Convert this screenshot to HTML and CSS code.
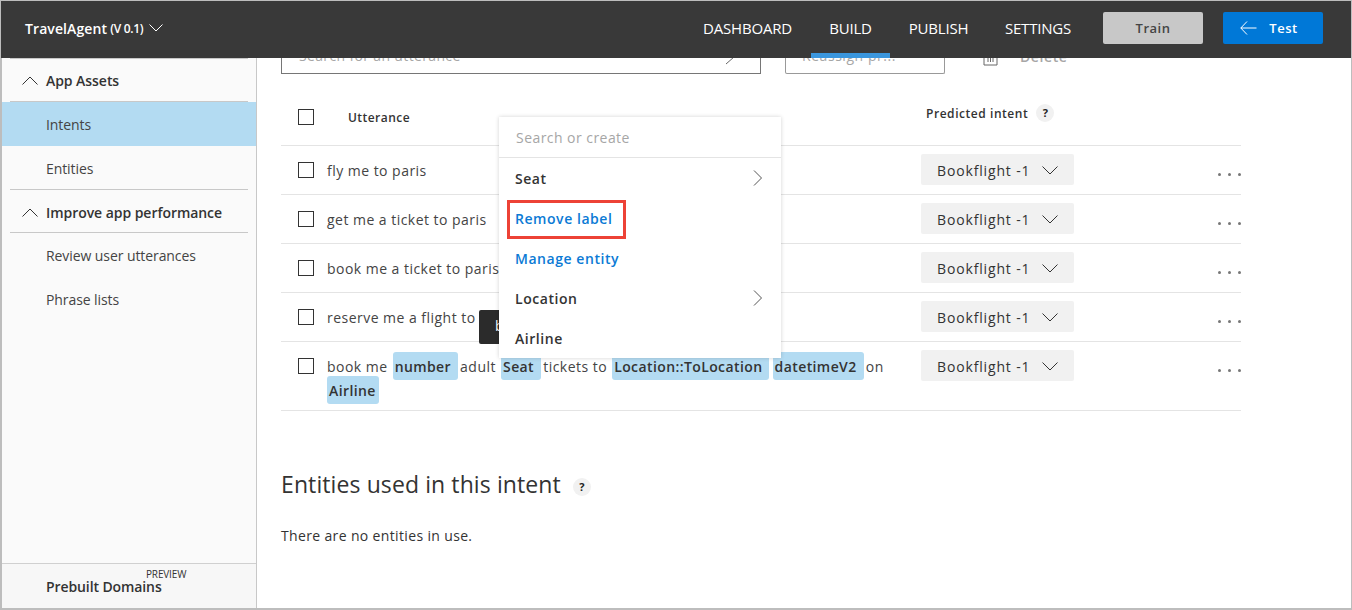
FILE: index.html
```html
<!DOCTYPE html>
<html lang="en">
<head>
  <meta charset="UTF-8" />
  <title>TravelAgent - Intents</title>
  <link rel="stylesheet" href="styles.css">
</head>
<body>
  <div class="app">
    <header class="topbar">
      <div class="app-name">
        <span class="app-title">TravelAgent</span>
        <span class="app-version">(V 0.1)</span>
        <svg class="chev-light" width="14" height="8" viewBox="0 0 14 8"><path d="M0.5 0.5 L7 7 L13.5 0.5" /></svg>
      </div>
      <nav class="nav">
        <a class="nav-link dashboard">DASHBOARD</a>
        <a class="nav-link build active">BUILD</a>
        <a class="nav-link publish">PUBLISH</a>
        <a class="nav-link settings">SETTINGS</a>
      </nav>
      <button class="btn btn-train">Train</button>
      <button class="btn btn-test">
        <svg width="17" height="14" viewBox="0 0 17 14"><path d="M7 0.5 L0.8 7 L7 13.5 M0.8 7 H16.5" /></svg>
        Test
      </button>
    </header>

    <div class="workspace">
      <aside class="sidebar">
        <div class="side-nav">
          <div class="side-group first">
            <svg class="chev-dark" width="16" height="9" viewBox="0 0 16 9"><path d="M0.5 8.5 L8 1 L15.5 8.5" /></svg>
            App Assets
          </div>
          <a class="side-link selected">Intents</a>
          <a class="side-link">Entities</a>
          <div class="side-group">
            <svg class="chev-dark" width="16" height="9" viewBox="0 0 16 9"><path d="M0.5 8.5 L8 1 L15.5 8.5" /></svg>
            Improve app performance
          </div>
          <a class="side-link">Review user utterances</a>
          <a class="side-link">Phrase lists</a>
        </div>
        <div class="side-footer">
          <span class="preview">PREVIEW</span>
          Prebuilt Domains
        </div>
      </aside>

      <main class="content">
        <div class="toolbar">
          <div class="search-box">
            <span>Search for an utterance</span>
            <svg width="18" height="10" viewBox="0 0 18 10"><path d="M1 9 L9 2 M12 0.5 L16 0.5" /></svg>
          </div>
          <div class="reassign">
            <span>Reassign pr...</span>
            <svg width="10" height="6" viewBox="0 0 10 6"><path d="M0.5 0.5 L5 5 L9.5 0.5" /></svg>
          </div>
          <div class="delete">
            <svg width="15" height="16" viewBox="0 0 15 16"><path d="M1 1 V15 H14 V1 M5 4 V12 M7.5 4 V12 M10 4 V12" /></svg>
            <span>Delete</span>
          </div>
        </div>

        <div class="table">
          <div class="table-head">
            <span class="checkbox head-check"></span>
            <span class="head-utterance">Utterance</span>
            <span class="head-intent">Predicted intent <span class="help">?</span></span>
          </div>

          <div class="row">
            <span class="checkbox"></span>
            <div class="utterance">fly me to paris</div>
            <div class="intent-select">Bookflight -1 <svg width="16" height="9" viewBox="0 0 16 9"><path d="M0.5 0.5 L8 8 L15.5 0.5" /></svg></div>
            <div class="more"><i></i><i></i><i></i></div>
          </div>
          <div class="row">
            <span class="checkbox"></span>
            <div class="utterance">get me a ticket to paris</div>
            <div class="intent-select">Bookflight -1 <svg width="16" height="9" viewBox="0 0 16 9"><path d="M0.5 0.5 L8 8 L15.5 0.5" /></svg></div>
            <div class="more"><i></i><i></i><i></i></div>
          </div>
          <div class="row">
            <span class="checkbox"></span>
            <div class="utterance">book me a ticket to paris</div>
            <div class="intent-select">Bookflight -1 <svg width="16" height="9" viewBox="0 0 16 9"><path d="M0.5 0.5 L8 8 L15.5 0.5" /></svg></div>
            <div class="more"><i></i><i></i><i></i></div>
          </div>
          <div class="row">
            <span class="checkbox"></span>
            <div class="utterance">reserve me a flight to</div>
            <div class="intent-select">Bookflight -1 <svg width="16" height="9" viewBox="0 0 16 9"><path d="M0.5 0.5 L8 8 L15.5 0.5" /></svg></div>
            <div class="more"><i></i><i></i><i></i></div>
          </div>
          <div class="row tall">
            <span class="checkbox"></span>
            <div class="utterance">book me <b class="tag">number</b> adult <b class="tag">Seat</b> tickets to <b class="tag">Location::ToLocation</b> <b class="tag">datetimeV2</b> on <b class="tag tag-end">Airline</b></div>
            <div class="intent-select">Bookflight -1 <svg width="16" height="9" viewBox="0 0 16 9"><path d="M0.5 0.5 L8 8 L15.5 0.5" /></svg></div>
            <div class="more"><i></i><i></i><i></i></div>
          </div>
        </div>

        <h2 class="section-title">Entities used in this intent <span class="help">?</span></h2>
        <p class="empty-note">There are no entities in use.</p>

        <div class="tooltip">b</div>

        <div class="label-menu">
          <div class="menu-search">Search or create</div>
          <div class="menu-item">Seat <svg width="10" height="16" viewBox="0 0 10 16"><path d="M1 0.5 L8.5 8 L1 15.5" /></svg></div>
          <div class="menu-item link">Remove label</div>
          <div class="menu-item link">Manage entity</div>
          <div class="menu-item">Location <svg width="10" height="16" viewBox="0 0 10 16"><path d="M1 0.5 L8.5 8 L1 15.5" /></svg></div>
          <div class="menu-item">Airline</div>
          <div class="highlight-box"></div>
        </div>
      </main>
    </div>
  </div>
</body>
</html>
```

FILE: styles.css
```css
* {
  box-sizing: border-box;
}

html, body {
  margin: 0;
  height: 100%;
  overflow: hidden;
}

body {
  font-family: 'Open Sans', 'Noto Sans', sans-serif;
  font-size: 14px;
  color: #333;
  background: #fff;
}

svg {
  fill: none;
  stroke: currentColor;
  stroke-width: 1;
}

.app {
  height: 610px;
  display: flex;
  flex-direction: column;
  border: 1px solid #bdbdbd;
  border-left-width: 2px;
  border-bottom-width: 2px;
}

/* top bar */
.topbar {
  height: 57px;
  flex: none;
  margin-left: -1px;
  padding-bottom: 3px;
  background: #393939;
  color: #fff;
  display: flex;
  align-items: center;
  position: relative;
  z-index: 3;
}

.app-name {
  margin-left: 24px;
  width: 678px;
  display: flex;
  align-items: center;
  font-weight: 600;
  letter-spacing: 0.1px;
}

.app-version {
  font-size: 12px;
  margin-left: 3px;
  letter-spacing: -0.3px;
}

.chev-light {
  margin-left: 6px;
}

.nav {
  display: flex;
  align-self: stretch;
  margin-bottom: -3px;
}

.nav-link {
  font-size: 15px;
  letter-spacing: -0.2px;
  color: #fff;
  padding-bottom: 3px;
  display: flex;
  align-items: center;
  justify-content: center;
  font-weight: 400;
  white-space: nowrap;
}

.dashboard { width: 89px; margin-right: 19px; }
.build { width: 79px; margin-right: 19px; }
.publish { width: 59px; margin-right: 37px; }
.settings { width: 66px; margin-right: 32px; }

.nav-link.active {
  box-shadow: inset 0 -5px 0 #3a96dd;
}

.btn {
  width: 100px;
  height: 32px;
  border: none;
  border-radius: 2px;
  font-family: inherit;
  font-size: 13px;
  font-weight: 600;
  letter-spacing: 0.5px;
  display: flex;
  align-items: center;
  justify-content: center;
}

.btn-train {
  background: #c8c8c8;
  color: #444;
  margin-right: 20px;
}

.btn-test {
  background: #0078d7;
  color: #fff;
  gap: 12px;
  padding-right: 14px;
}

/* sidebar */
.workspace {
  flex: 1;
  display: flex;
  min-height: 0;
}

.sidebar {
  width: 255px;
  flex: none;
  background: #fafafa;
  border-right: 1px solid #c8c8c8;
  display: flex;
  flex-direction: column;
}

.side-nav {
  flex: 1;
}

.side-group {
  height: 44px;
  margin: -1px 8px 0;
  border-top: 1px solid #c8c8c8;
  border-bottom: 1px solid #c8c8c8;
  display: flex;
  align-items: center;
  font-weight: 600;
  letter-spacing: -0.05px;
  color: #333;
  gap: 8px;
  padding: 2px 0 0 12px;
}

.side-group.first {
  margin-top: 0;
  padding-top: 0;
}

.side-link {
  display: flex;
  align-items: center;
  height: 44px;
  padding-left: 44px;
  letter-spacing: -0.08px;
  color: #444;
}

.side-link.selected {
  background: #b3dbf2;
}

.side-footer {
  height: 45px;
  flex: none;
  background: #f7f7f7;
  border-top: 1px solid #d0d0d0;
  padding: 13px 0 0 44px;
  font-weight: 600;
  letter-spacing: -0.1px;
  position: relative;
}

.preview {
  position: absolute;
  left: 144px;
  top: 5px;
  font-size: 10px;
  line-height: 10px;
  font-weight: 400;
  letter-spacing: -0.15px;
}

/* main */
.content {
  flex: 1;
  position: relative;
  padding: 0 110px 0 24px;
  overflow: hidden;
}

.toolbar {
  height: 16px;
  display: flex;
  align-items: flex-end;
  overflow: hidden;
  color: #a6a6a6;
  letter-spacing: 0.35px;
}

.search-box {
  width: 480px;
  height: 32px;
  flex: none;
  border: 1px solid #767676;
  border-top: none;
  display: flex;
  align-items: flex-end;
  justify-content: space-between;
  padding: 0 17px 8px 17px;
}

.search-box svg {
  color: #666;
}

.reassign {
  width: 160px;
  height: 32px;
  flex: none;
  margin-left: 24px;
  border: 1px solid #999;
  border-top: none;
  border-radius: 2px;
  display: flex;
  align-items: flex-end;
  justify-content: space-between;
  padding: 0 20px 8px 16px;
  letter-spacing: 0.55px;
}

.reassign svg {
  color: #888;
  margin-bottom: 6px;
}

.delete {
  display: flex;
  align-items: flex-end;
  margin-left: 38px;
  gap: 22px;
  font-weight: 600;
  padding-bottom: 8px;
  letter-spacing: 0.6px;
}

.delete svg {
  color: #666;
}

.table-head {
  height: 72px;
  position: relative;
  border-bottom: 1px solid #e4e4e4;
  font-size: 12px;
  font-weight: 600;
  color: #333;
}

.checkbox {
  width: 16px;
  height: 16px;
  flex: none;
  border: 1px solid #333;
  display: block;
  background: #fff;
}

.head-check {
  position: absolute;
  left: 17px;
  top: 35px;
}

.head-utterance {
  position: absolute;
  left: 67px;
  top: 35px;
  letter-spacing: 0.45px;
}

.head-intent {
  position: absolute;
  left: 645px;
  top: 31px;
  display: flex;
  align-items: center;
  gap: 8px;
  letter-spacing: 0.55px;
}

.head-intent .help {
  margin-top: -2px;
}

.help {
  display: inline-flex;
  width: 18px;
  height: 18px;
  align-items: center;
  justify-content: center;
  border-radius: 50%;
  background: #f1f1f1;
  color: #222;
  font-size: 11px;
  font-weight: 700;
  letter-spacing: 0;
}

.row {
  display: flex;
  align-items: flex-start;
  height: 49px;
  border-bottom: 1px solid #e4e4e4;
  padding: 8px 0 0 17px;
}

.row.tall {
  height: 69px;
}

.row > .checkbox {
  margin-top: 8px;
}

.utterance {
  width: 582px;
  flex: none;
  margin-left: 13px;
  padding-top: 5px;
  line-height: 24px;
  letter-spacing: 0.47px;
  color: #444;
}

.row:not(.tall) .utterance {
  white-space: nowrap;
}

.tag {
  background: #b3dbf2;
  border-radius: 3px;
  padding: 5px 7px 4px 2px;
  margin: 0 -2px 0 1px;
  font-weight: 600;
  letter-spacing: 0.4px;
  color: #333;
}

.tag-end {
  padding-right: 3px;
  margin-left: 0;
}

.intent-select {
  width: 153px;
  height: 31px;
  flex: none;
  margin-left: 12px;
  padding: 1px 0 0 16px;
  background: #f1f1f1;
  border-radius: 2px;
  display: flex;
  align-items: center;
  gap: 12px;
  white-space: nowrap;
  letter-spacing: 0.85px;
  color: #333;
}

.more {
  display: flex;
  gap: 7px;
  margin-left: auto;
  margin-top: 19px;
}

.more i {
  width: 3px;
  height: 3px;
  border-radius: 50%;
  background: #777;
}

.section-title {
  font-size: 23px;
  font-weight: 400;
  margin: 56px 0 0;
  line-height: 34px;
  display: flex;
  align-items: center;
  gap: 12px;
  color: #333;
  letter-spacing: 0.1px;
}

.section-title .help {
  margin-top: 5px;
}

.empty-note {
  margin: 25px 0 0;
  letter-spacing: 0.35px;
  color: #333;
}

/* overlays */
.tooltip {
  position: absolute;
  left: 222px;
  top: 252px;
  width: 60px;
  height: 34px;
  border-radius: 2px;
  background: #2b2b2b;
  color: #fff;
  padding: 6px 0 0 16px;
}

.label-menu {
  position: absolute;
  left: 242px;
  top: 59px;
  width: 282px;
  height: 241px;
  background: #fff;
  box-shadow: 0 0 4px rgba(0, 0, 0, 0.18);
}

.menu-search {
  height: 41px;
  padding: 11px 0 0 17px;
  color: #a6a6a6;
  border-bottom: 1px solid #e4e4e4;
  letter-spacing: 0.45px;
}

.menu-item {
  height: 40px;
  padding: 0 18px 0 16px;
  display: flex;
  align-items: center;
  justify-content: space-between;
  font-weight: 600;
  color: #333;
  letter-spacing: 0.55px;
}

.menu-item svg {
  color: #555;
}

.menu-item.link {
  color: #0b7ad5;
}

.highlight-box {
  position: absolute;
  left: 8px;
  top: 83px;
  width: 119px;
  height: 39px;
  border: 3px solid #ed4236;
}
```
